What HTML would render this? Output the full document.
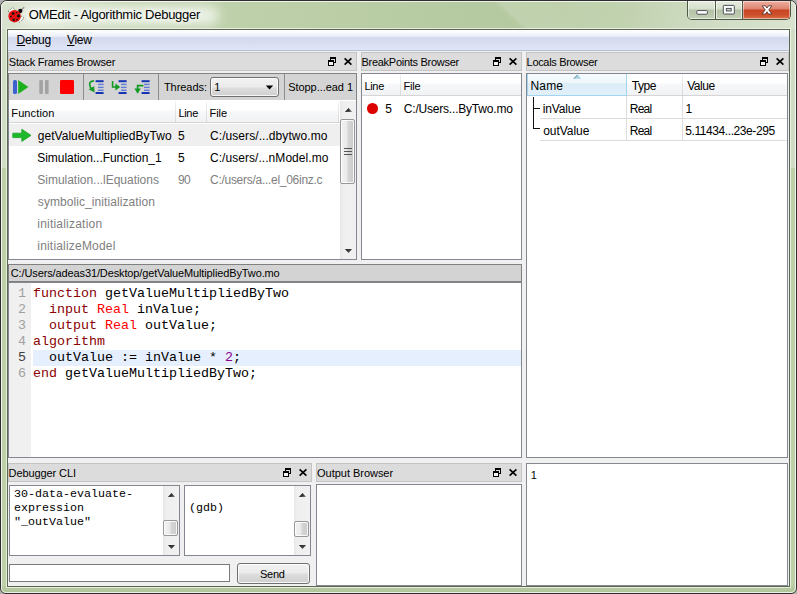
<!DOCTYPE html>
<html>
<head>
<meta charset="utf-8">
<title>OMEdit - Algorithmic Debugger</title>
<style>
html,body{margin:0;padding:0;}
body{width:797px;height:594px;overflow:hidden;background:#b0b0b0;font-family:"Liberation Sans",sans-serif;font-size:11px;color:#000;position:relative;}
div,span{box-sizing:border-box;}
.a{position:absolute;}
#frame{position:absolute;left:0;top:0;width:797px;height:594px;border-radius:7px 7px 6px 6px;background:#bdd0a8;border:1px solid #2e2e2e;overflow:hidden;}
#sideL,#sideR{position:absolute;top:28px;width:6px;height:139px;background:#d1dcc4;}
#sideL{left:0;}#sideR{left:789px;}
#frameglow{position:absolute;left:0;top:0;width:795px;height:592px;border-radius:6px 6px 5px 5px;border:1px solid rgba(255,255,255,.75);}
#titlegrad{position:absolute;left:0px;top:0px;width:795px;height:28px;overflow:hidden;background:linear-gradient(90deg,#d9e2ce 0px,#d9e2ce 45px,#cddac0 80px,#c4d4b3 120px,#bfd1ac 200px,#bccfa8 285px,#b7cba2 440px,#b5c9a0 520px,#b9cca5 620px,#c9d7bb 700px,#d6e0ca 795px);}
#stripe{position:absolute;left:490px;top:0;width:340px;height:28px;transform:skewX(47deg);transform-origin:0 0;background:linear-gradient(90deg,rgba(255,255,255,0) 0,rgba(255,255,255,.16) 8px,rgba(255,255,255,.12) 60px,rgba(255,255,255,.08) 100%);}
#tglow{position:absolute;left:20px;top:5px;width:198px;height:19px;border-radius:9px;background:rgba(244,248,240,.85);filter:blur(6px);}
#client{position:absolute;left:7px;top:29px;width:783px;height:558px;border:1px solid #5c6652;background:#f0f0f0;}
#clientglow{position:absolute;left:6px;top:28px;width:785px;height:560px;border:1px solid rgba(240,245,235,.8);}
#menubar{position:absolute;left:8px;top:30px;width:781px;height:21px;background:linear-gradient(180deg,#ffffff 0px,#f6f8fc 3px,#e9ecf7 7px,#d4daee 7px,#d7ddef 12px,#e0e5f5 19px,#e0e5f5 20px,#b9bfd8 20px,#b9bfd8 21px);}
.dt{position:absolute;height:19px;background:#dcdcdc;border:1px solid #c4c4c4;}
.panel{position:absolute;background:#fff;border:1px solid #828790;}
.t{position:absolute;white-space:nowrap;line-height:16px;}
.mono{font-family:"Liberation Mono",monospace;}
.hdr{position:absolute;height:21px;background:linear-gradient(180deg,#fff 0,#fff 9px,#f7f8fa 10px,#f1f2f4 21px);}
.hsep{position:absolute;width:1px;background:linear-gradient(180deg,#f2f2f2,#d8d8d8);}
.code{position:absolute;left:33px;white-space:pre;font-family:"Liberation Mono",monospace;font-size:13.333px;line-height:16px;height:16px;}
.ln{position:absolute;left:9px;width:17px;text-align:right;font-family:"Liberation Mono",monospace;font-size:13.333px;line-height:16px;color:#a0a0a0;}
.cli{position:absolute;white-space:pre;font-family:"Liberation Mono",monospace;font-size:11.667px;line-height:14px;}
.sbtrack{position:absolute;background:#f0f0f0;}
.thumb{position:absolute;border:1px solid #979797;border-radius:2px;background:linear-gradient(90deg,#f3f3f3 0,#e9e9e9 48%,#d6d6d6 52%,#cacaca 100%);box-shadow:inset 0 0 0 1px rgba(255,255,255,.85);}
.sbtrack{background:linear-gradient(90deg,#e6e6e6 0,#efefef 3px,#f1f1f1 100%);}
</style>
</head>
<body>
<div id="frame"><div id="titlegrad"><div id="stripe"></div></div><div id="tglow"></div><div class="a" style="left:0;top:585px;width:795px;height:7px;background:linear-gradient(180deg,#b9cba3,#b1c599)"></div><div id="sideL"></div><div id="sideR"></div><div id="frameglow"></div></div>
<div id="clientglow"></div>
<div id="client"></div>
<div id="menubar"></div>
<div class="a" style="left:8px;top:51px;width:781px;height:1px;background:#f0f0f0"></div>

<!-- dock titles -->
<div class="dt" style="left:8px;top:52px;width:349px"></div>
<div class="dt" style="left:361px;top:52px;width:161px"></div>
<div class="dt" style="left:526px;top:52px;width:263px"></div>
<div class="dt" style="left:8px;top:463px;width:304px"></div>
<div class="dt" style="left:316px;top:463px;width:206px"></div>

<svg class="a" width="0" height="0" style="left:0;top:0"><defs><linearGradient id="gu" x1="0" y1="0" x2="1" y2="1"><stop offset="0" stop-color="#111"/><stop offset="0.55" stop-color="#333"/><stop offset="1" stop-color="#8a8a8a"/></linearGradient><linearGradient id="gd" x1="0" y1="0" x2="1" y2="1"><stop offset="0" stop-color="#222"/><stop offset="0.6" stop-color="#444"/><stop offset="1" stop-color="#8a8a8a"/></linearGradient></defs></svg>
<!-- stack frames toolbar -->
<div class="a" style="left:8px;top:73px;width:349px;height:28px;background:#d4d4d4;border:1px solid #828282"></div>
<div class="a" style="left:83px;top:74px;width:1px;height:26px;background:#8c8c8c"></div>
<div class="a" style="left:158px;top:74px;width:1px;height:26px;background:#8c8c8c"></div>
<div class="a" style="left:284px;top:74px;width:1px;height:26px;background:#8c8c8c"></div>
<!-- resume / pause / stop -->
<svg class="a" style="left:12px;top:78px" width="66" height="18" viewBox="0 0 66 18">
<rect x="1" y="2" width="4" height="14" rx="1.5" fill="#3b62cf"/>
<path d="M6.2 2 L16.4 9 L6.2 16 Z" fill="#1cb01c"/>
<rect x="27.3" y="2" width="3.6" height="14" rx="1" fill="#a2a2a2"/>
<rect x="33" y="2" width="3.6" height="14" rx="1" fill="#a2a2a2"/>
<rect x="48" y="2" width="14" height="14" rx="1.2" fill="#ff0000"/>
</svg>
<!-- step icons -->
<svg class="a" style="left:86px;top:78px" width="70" height="18" viewBox="0 0 70 18">
<g id="bars1">
<rect x="9.6" y="2.2" width="8" height="2" fill="#1434b4"/>
<rect x="12" y="5.7" width="5.6" height="1.4" fill="#5f7dd6"/>
<rect x="12" y="8.7" width="5.6" height="1.4" fill="#5f7dd6"/>
<rect x="12" y="11.6" width="5.6" height="1.4" fill="#5f7dd6"/>
<rect x="9.6" y="14" width="8" height="2" fill="#1434b4"/>
</g>
<path d="M8 3.2 C4.2 2.6 2.6 5.2 4.2 8.6 L5.4 10.8" fill="none" stroke="#129a22" stroke-width="1.7"/>
<path d="M2.6 11.2 L8.2 8.2 L8.6 14.6 Z" fill="#129a22"/>
<g transform="translate(23,0)">
<rect x="9.6" y="2.2" width="8" height="2" fill="#1434b4"/>
<rect x="12" y="5.7" width="5.6" height="1.4" fill="#5f7dd6"/>
<rect x="12" y="8.7" width="5.6" height="1.4" fill="#5f7dd6"/>
<rect x="12" y="11.6" width="5.6" height="1.4" fill="#5f7dd6"/>
<rect x="9.6" y="14" width="8" height="2" fill="#1434b4"/>
<path d="M3.6 3 L3.6 9 L7 9" fill="none" stroke="#129a22" stroke-width="1.6"/>
<path d="M6.4 5.6 L11.2 9 L6.4 12.4 Z" fill="#129a22"/>
</g>
<g transform="translate(46,0)">
<rect x="9.6" y="2.2" width="8" height="2" fill="#1434b4"/>
<rect x="12" y="5.7" width="5.6" height="1.4" fill="#5f7dd6"/>
<rect x="12" y="8.7" width="5.6" height="1.4" fill="#5f7dd6"/>
<rect x="12" y="11.6" width="5.6" height="1.4" fill="#5f7dd6"/>
<rect x="9.6" y="14" width="8" height="2" fill="#1434b4"/>
<path d="M11.4 7.6 L5.6 7.6 L5.6 11" fill="none" stroke="#129a22" stroke-width="1.7"/>
<path d="M2.4 10.4 L8.8 10.4 L5.6 15.8 Z" fill="#129a22"/>
</g>
</svg>
<!-- combobox -->
<div class="a" style="left:210px;top:77px;width:69px;height:20px;border:1px solid #707070;border-radius:3px;background:linear-gradient(180deg,#f2f2f2 0,#ebebeb 9px,#dddddd 10px,#cfcfcf 18px);box-shadow:inset 0 0 0 1px rgba(255,255,255,.8)"></div>
<svg class="a" style="left:265px;top:85px" width="9" height="5" viewBox="0 0 9 5"><path d="M0.8 0.6 L8.2 0.6 L4.5 4.4 Z" fill="#000"/></svg>

<!-- stack frames tree -->
<div class="panel" style="left:8px;top:100px;width:349px;height:160px;border-top:none"></div>
<div class="hdr" style="left:9px;top:101px;width:330px"></div>
<div class="a" style="left:9px;top:122px;width:331px;height:1px;background:#d5d5d5"></div>
<div class="hsep" style="left:175px;top:101px;height:21px"></div>
<div class="hsep" style="left:206px;top:101px;height:21px"></div>
<div class="hsep" style="left:338px;top:101px;height:21px"></div>
<div class="a" style="left:9px;top:124px;width:331px;height:22px;background:#efefef"></div>
<svg class="a" style="left:11px;top:127px" width="22" height="16" viewBox="0 0 22 16"><path d="M1.8 6.2 L10.8 6.2 L10.8 2.2 L20 8.4 L10.8 14.4 L10.8 10.6 L1.8 10.6 Z" fill="#1eb82c" stroke="#18a224" stroke-width="0.8" stroke-linejoin="round"/></svg>
<!-- scrollbar -->
<div class="sbtrack" style="left:340px;top:101px;width:16px;height:158px"></div>
<svg class="a" style="left:344px;top:107px" width="9" height="6" viewBox="0 0 9 6"><path d="M0.9 4.9 L4.5 1.1 L8.1 4.9 Z" fill="url(#gu)"/></svg>
<svg class="a" style="left:344px;top:248px" width="9" height="6" viewBox="0 0 9 6"><path d="M0.9 1.1 L8.1 1.1 L4.5 4.9 Z" fill="url(#gd)"/></svg>
<div class="thumb" style="left:340px;top:119px;width:15px;height:65px"></div>
<div class="a" style="left:344px;top:148px;width:8px;height:1px;background:#555"></div>
<div class="a" style="left:344px;top:151px;width:8px;height:1px;background:#555"></div>
<div class="a" style="left:344px;top:154px;width:8px;height:1px;background:#555"></div>

<!-- breakpoints tree -->
<div class="panel" style="left:361px;top:73px;width:161px;height:187px"></div>
<div class="hdr" style="left:362px;top:74px;width:159px"></div>
<div class="a" style="left:362px;top:95px;width:159px;height:1px;background:#d5d5d5"></div>
<div class="hsep" style="left:400px;top:74px;height:21px"></div>
<div class="a" style="left:367.2px;top:103px;width:10.6px;height:10.6px;border-radius:50%;background:#dc0000"></div>

<!-- locals tree -->
<div class="panel" style="left:526px;top:73px;width:262px;height:385px"></div>
<div class="hdr" style="left:527px;top:74px;width:260px"></div>
<div class="a" style="left:527px;top:95px;width:260px;height:1px;background:#d5d5d5"></div>
<div class="a" style="left:527px;top:74px;width:100px;height:22px;border:1px solid #a3d5f0;border-top:none;background:linear-gradient(180deg,#f5fafd 0,#eff7fc 9px,#dcedf8 9px,#e1f0fa 21px)"></div>
<svg class="a" style="left:573px;top:74px" width="9" height="6" viewBox="0 0 9 6"><path d="M0.8 4.8 L4.6 0.8 L8.4 4.8 Z" fill="#a8d2e6"/><path d="M0.8 4.8 L4.6 0.8" stroke="#5b7d8e" stroke-width="0.9" fill="none"/></svg>
<div class="hsep" style="left:682px;top:74px;height:21px"></div>
<!-- grid lines -->
<div class="a" style="left:540px;top:118px;width:247px;height:1px;background:#dcdcdc"></div>
<div class="a" style="left:540px;top:140px;width:247px;height:1px;background:#dcdcdc"></div>
<div class="a" style="left:626px;top:96px;width:1px;height:44px;background:#dcdcdc"></div>
<div class="a" style="left:682px;top:96px;width:1px;height:44px;background:#dcdcdc"></div>
<!-- branches -->
<div class="a" style="left:533px;top:97px;width:1px;height:32px;background:#111"></div>
<div class="a" style="left:533px;top:108px;width:7px;height:1px;background:#111"></div>
<div class="a" style="left:533px;top:128px;width:7px;height:1px;background:#111"></div>

<!-- file label + editor -->
<div class="a" style="left:8px;top:264px;width:514px;height:18px;background:#d3d3d3;border:1px solid #808080"></div>
<div class="panel" style="left:8px;top:282px;width:514px;height:176px"></div>
<div class="a" style="left:9px;top:283px;width:22px;height:174px;background:#f0f0f0"></div>
<div class="a" style="left:33px;top:350px;width:488px;height:16px;background:#e6effd"></div>

<!-- CLI -->
<div class="panel" style="left:9px;top:485px;width:171px;height:71px"></div>
<div class="sbtrack" style="left:163px;top:486px;width:16px;height:69px"></div>
<div class="panel" style="left:184px;top:485px;width:127px;height:71px"></div>
<div class="sbtrack" style="left:294px;top:486px;width:16px;height:69px"></div>
<svg class="a" style="left:167px;top:492px" width="9" height="6" viewBox="0 0 9 6"><path d="M0.9 4.9 L4.5 1.1 L8.1 4.9 Z" fill="url(#gu)"/></svg>
<svg class="a" style="left:167px;top:544px" width="9" height="6" viewBox="0 0 9 6"><path d="M0.9 1.1 L8.1 1.1 L4.5 4.9 Z" fill="url(#gd)"/></svg>
<svg class="a" style="left:298px;top:492px" width="9" height="6" viewBox="0 0 9 6"><path d="M0.9 4.9 L4.5 1.1 L8.1 4.9 Z" fill="url(#gu)"/></svg>
<svg class="a" style="left:298px;top:544px" width="9" height="6" viewBox="0 0 9 6"><path d="M0.9 1.1 L8.1 1.1 L4.5 4.9 Z" fill="url(#gd)"/></svg>
<div class="thumb" style="left:163px;top:520px;width:15px;height:16px"></div>
<div class="thumb" style="left:294px;top:521px;width:15px;height:16px"></div>
<div class="a" style="left:9px;top:564px;width:221px;height:18px;background:#fff;border:1px solid #7a7a7a"></div>
<div class="a" style="left:237px;top:563px;width:73px;height:21px;border:1px solid #707070;border-radius:3px;background:linear-gradient(180deg,#f2f2f2 0,#ebebeb 9px,#dddddd 10px,#cfcfcf 19px);box-shadow:inset 0 0 0 1px rgba(255,255,255,.8)"></div>

<!-- output browser, bottom-right -->
<div class="panel" style="left:316px;top:484px;width:206px;height:102px"></div>
<div class="panel" style="left:526px;top:463px;width:262px;height:123px"></div>


<div class="t" style="left:28.7px;top:6px;font-size:13px;line-height:17px;letter-spacing:-0.27px;text-shadow:0 0 5px #fff,0 0 9px #fff;">OMEdit - Algorithmic Debugger</div>
<div class="t" style="left:16.6px;top:32px;font-size:12px;letter-spacing:-0.19px;"><u>D</u>ebug</div>
<div class="t" style="left:67.0px;top:32px;font-size:12px;letter-spacing:-0.31px;"><u>V</u>iew</div>
<div class="t" style="left:8.8px;top:54px;font-size:11px;letter-spacing:-0.25px;">Stack Frames Browser</div>
<div class="t" style="left:361.5px;top:54px;font-size:11px;letter-spacing:-0.28px;">BreakPoints Browser</div>
<div class="t" style="left:526.6px;top:54px;font-size:11px;letter-spacing:-0.32px;">Locals Browser</div>
<div class="t" style="left:8.6px;top:465px;font-size:11px;letter-spacing:-0.10px;">Debugger CLI</div>
<div class="t" style="left:317.1px;top:465px;font-size:11px;letter-spacing:-0.03px;">Output Browser</div>
<div class="t" style="left:163.9px;top:79px;font-size:11px;letter-spacing:-0.05px;">Threads:</div>
<div class="t" style="left:214.2px;top:79px;font-size:11px;">1</div>
<div class="t" style="left:288.2px;top:79px;font-size:11px;letter-spacing:-0.05px;">Stopp...ead 1</div>
<div class="t" style="left:11.3px;top:105px;font-size:11px;letter-spacing:0.12px;">Function</div>
<div class="t" style="left:178.5px;top:105px;font-size:11px;letter-spacing:-0.35px;">Line</div>
<div class="t" style="left:209.6px;top:105px;font-size:11px;letter-spacing:-0.07px;">File</div>
<div class="t" style="left:364.5px;top:78px;font-size:11px;letter-spacing:-0.35px;">Line</div>
<div class="t" style="left:403.4px;top:78px;font-size:11px;letter-spacing:-0.13px;">File</div>
<div class="t" style="left:530.4px;top:78px;font-size:12px;letter-spacing:0.21px;">Name</div>
<div class="t" style="left:631.7px;top:78px;font-size:12px;letter-spacing:-0.41px;">Type</div>
<div class="t" style="left:687.2px;top:78px;font-size:12px;letter-spacing:-0.46px;">Value</div>
<div class="t" style="left:37.8px;top:128px;font-size:12px;letter-spacing:0.03px;">getValueMultipliedByTwo</div>
<div class="t" style="left:177.9px;top:128px;font-size:12px;">5</div>
<div class="t" style="left:210.0px;top:128px;font-size:12px;letter-spacing:0.07px;">C:/users/...dbytwo.mo</div>
<div class="t" style="left:37.3px;top:150px;font-size:12px;letter-spacing:-0.05px;">Simulation...Function_1</div>
<div class="t" style="left:177.9px;top:150px;font-size:12px;">5</div>
<div class="t" style="left:210.0px;top:150px;font-size:12px;letter-spacing:0.05px;">C:/users/...nModel.mo</div>
<div class="t" style="left:37.3px;top:172px;font-size:12px;letter-spacing:-0.02px;color:#808080;">Simulation...lEquations</div>
<div class="t" style="left:178.0px;top:172px;font-size:12px;letter-spacing:-0.72px;color:#808080;">90</div>
<div class="t" style="left:210.0px;top:172px;font-size:12px;letter-spacing:-0.28px;color:#808080;">C:/users/a...el_06inz.c</div>
<div class="t" style="left:37.8px;top:194px;font-size:12px;letter-spacing:0.08px;color:#808080;">symbolic_initialization</div>
<div class="t" style="left:37.3px;top:216px;font-size:12px;letter-spacing:0.21px;color:#808080;">initialization</div>
<div class="t" style="left:37.3px;top:238px;font-size:12px;letter-spacing:0.19px;color:#808080;">initializeModel</div>
<div class="t" style="left:385.3px;top:101px;font-size:12px;">5</div>
<div class="t" style="left:403.8px;top:101px;font-size:12px;letter-spacing:-0.20px;">C:/Users...ByTwo.mo</div>
<div class="t" style="left:542.7px;top:101px;font-size:12px;letter-spacing:-0.15px;">inValue</div>
<div class="t" style="left:629.8px;top:101px;font-size:12px;letter-spacing:-0.76px;">Real</div>
<div class="t" style="left:685.6px;top:101px;font-size:12px;">1</div>
<div class="t" style="left:543.2px;top:123px;font-size:12px;letter-spacing:-0.05px;">outValue</div>
<div class="t" style="left:629.8px;top:123px;font-size:12px;letter-spacing:-0.76px;">Real</div>
<div class="t" style="left:685.2px;top:123px;font-size:12px;letter-spacing:-0.41px;">5.11434...23e-295</div>
<div class="t" style="left:10.8px;top:265px;font-size:11px;letter-spacing:-0.12px;">C:/Users/adeas31/Desktop/getValueMultipliedByTwo.mo</div>
<div class="t" style="left:260.1px;top:566px;font-size:11px;letter-spacing:-0.31px;">Send</div>
<div class="t" style="left:530.8px;top:467px;font-size:11px;font-family:"Liberation Serif",serif;">1</div>
<div class="code" style="top:286.4px"><span style="color:#8b0000">function</span> getValueMultipliedByTwo</div>
<div class="ln" style="top:286.4px;color:#a0a0a0">1</div>
<div class="code" style="top:302.4px">  <span style="color:#8b0000">input</span> <span style="color:#ff0000">Real</span> inValue;</div>
<div class="ln" style="top:302.4px;color:#a0a0a0">2</div>
<div class="code" style="top:318.4px">  <span style="color:#8b0000">output</span> <span style="color:#ff0000">Real</span> outValue;</div>
<div class="ln" style="top:318.4px;color:#a0a0a0">3</div>
<div class="code" style="top:334.4px"><span style="color:#8b0000">algorithm</span></div>
<div class="ln" style="top:334.4px;color:#a0a0a0">4</div>
<div class="code" style="top:350.4px">  outValue := inValue * <span style="color:#8b008b">2</span>;</div>
<div class="ln" style="top:350.4px;color:#404040">5</div>
<div class="code" style="top:366.4px"><span style="color:#8b0000">end</span> getValueMultipliedByTwo;</div>
<div class="ln" style="top:366.4px;color:#a0a0a0">6</div>
<div class="cli" style="left:14px;top:486.9px">30-data-evaluate-</div>
<div class="cli" style="left:14px;top:500.9px">expression</div>
<div class="cli" style="left:14px;top:514.9px">&quot;_outValue&quot;</div>
<div class="cli" style="left:189px;top:500.9px">(gdb)</div>
<svg class="a" style="left:328px;top:57px" width="25" height="10" viewBox="0 0 25 10"><rect x="2.5" y="1" width="5" height="4.5" fill="none" stroke="#000" stroke-width="1"/><rect x="2" y="0" width="6" height="2" fill="#000"/><rect x="0.5" y="4" width="5" height="4.5" fill="#f4f4f4" stroke="#000" stroke-width="1"/><rect x="0" y="3" width="6" height="2" fill="#000"/><path d="M16.6 1.4 L23.4 7.6 M23.4 1.4 L16.6 7.6" stroke="#000" stroke-width="1.65" fill="none"/></svg>
<svg class="a" style="left:493px;top:57px" width="25" height="10" viewBox="0 0 25 10"><rect x="2.5" y="1" width="5" height="4.5" fill="none" stroke="#000" stroke-width="1"/><rect x="2" y="0" width="6" height="2" fill="#000"/><rect x="0.5" y="4" width="5" height="4.5" fill="#f4f4f4" stroke="#000" stroke-width="1"/><rect x="0" y="3" width="6" height="2" fill="#000"/><path d="M16.6 1.4 L23.4 7.6 M23.4 1.4 L16.6 7.6" stroke="#000" stroke-width="1.65" fill="none"/></svg>
<svg class="a" style="left:760px;top:57px" width="25" height="10" viewBox="0 0 25 10"><rect x="2.5" y="1" width="5" height="4.5" fill="none" stroke="#000" stroke-width="1"/><rect x="2" y="0" width="6" height="2" fill="#000"/><rect x="0.5" y="4" width="5" height="4.5" fill="#f4f4f4" stroke="#000" stroke-width="1"/><rect x="0" y="3" width="6" height="2" fill="#000"/><path d="M16.6 1.4 L23.4 7.6 M23.4 1.4 L16.6 7.6" stroke="#000" stroke-width="1.65" fill="none"/></svg>
<svg class="a" style="left:283px;top:468px" width="25" height="10" viewBox="0 0 25 10"><rect x="2.5" y="1" width="5" height="4.5" fill="none" stroke="#000" stroke-width="1"/><rect x="2" y="0" width="6" height="2" fill="#000"/><rect x="0.5" y="4" width="5" height="4.5" fill="#f4f4f4" stroke="#000" stroke-width="1"/><rect x="0" y="3" width="6" height="2" fill="#000"/><path d="M16.6 1.4 L23.4 7.6 M23.4 1.4 L16.6 7.6" stroke="#000" stroke-width="1.65" fill="none"/></svg>
<svg class="a" style="left:493px;top:468px" width="25" height="10" viewBox="0 0 25 10"><rect x="2.5" y="1" width="5" height="4.5" fill="none" stroke="#000" stroke-width="1"/><rect x="2" y="0" width="6" height="2" fill="#000"/><rect x="0.5" y="4" width="5" height="4.5" fill="#f4f4f4" stroke="#000" stroke-width="1"/><rect x="0" y="3" width="6" height="2" fill="#000"/><path d="M16.6 1.4 L23.4 7.6 M23.4 1.4 L16.6 7.6" stroke="#000" stroke-width="1.65" fill="none"/></svg>
<!-- caption buttons -->
<div class="a" style="left:687px;top:1px;width:104px;height:19px;border:1px solid #4f5747;border-top:none;border-radius:0 0 5px 5px;overflow:hidden;background:#c4d0b8">
 <div class="a" style="left:0;top:0;width:27px;height:18px;background:linear-gradient(180deg,#e6ecdf 0,#d6dfcc 8px,#b4c2a6 9px,#c3cfb6 18px);box-shadow:inset 0 0 0 1px rgba(255,255,255,.6)"></div>
 <div class="a" style="left:27px;top:0;width:1px;height:18px;background:#4f5747"></div>
 <div class="a" style="left:28px;top:0;width:26px;height:18px;background:linear-gradient(180deg,#e6ecdf 0,#d6dfcc 8px,#b4c2a6 9px,#c3cfb6 18px);box-shadow:inset 0 0 0 1px rgba(255,255,255,.6)"></div>
 <div class="a" style="left:54px;top:0;width:1px;height:18px;background:#4f5747"></div>
 <div class="a" style="left:55px;top:0;width:47px;height:18px;background:linear-gradient(180deg,#eeb0a0 0,#dc8470 8px,#c94424 9px,#cd4f2b 14px,#d9764a 18px);box-shadow:inset 0 0 0 1px rgba(255,255,255,.45)"></div>
</div>
<svg class="a" style="left:688px;top:0px" width="102" height="20" viewBox="0 0 102 20">
<rect x="8.8" y="10.6" width="10.6" height="3.6" rx="0.8" fill="#fff" stroke="#4a4f58" stroke-width="1"/>
<rect x="35.3" y="5.4" width="11" height="8.6" rx="0.8" fill="#fff" stroke="#4a4f58" stroke-width="1"/>
<rect x="38.4" y="8.4" width="4.8" height="2.6" fill="#c8d2be" stroke="#4a4f58" stroke-width="1"/>
<path d="M74.2 5.8 L77.4 5.8 L79 8 L80.6 5.8 L83.8 5.8 L80.8 9.9 L83.9 14 L80.6 14 L79 11.8 L77.4 14 L74.1 14 L77.2 9.9 Z" fill="#fff" stroke="#5a3a34" stroke-width="0.9" stroke-linejoin="round"/>
</svg>
<!-- ladybug -->
<svg class="a" style="left:6px;top:4px" width="22" height="22" viewBox="0 0 22 22">
<path d="M2.1 7.4 L6.9 3.5 L9 5.8 L5 9.6 Z" fill="#f6f8f2" stroke="#333" stroke-width="0.7" stroke-dasharray="1.1 1.1"/>
<path d="M15.3 12 L18 14.3 L13.3 18.4 L11.6 17 Z" fill="#f6f8f2" stroke="#333" stroke-width="0.7" stroke-dasharray="1.1 1.1"/>
<path d="M15.6 5.8 L17.8 3.6" stroke="#9a9a9a" stroke-width="1.4" stroke-linecap="round" fill="none"/>
<circle cx="14.3" cy="7" r="2.15" fill="#0a0a0a"/>
<circle cx="8.6" cy="12.2" r="6.2" fill="#e81010"/>
<circle cx="7.1" cy="9.6" r="1.4" fill="#111"/>
<circle cx="10.7" cy="8.5" r="0.75" fill="#111"/>
<circle cx="12.5" cy="11.9" r="1.6" fill="#111"/>
<circle cx="4.9" cy="12.6" r="0.9" fill="#111"/>
<circle cx="7.7" cy="15.7" r="1.3" fill="#111"/>
<circle cx="11" cy="15.6" r="0.85" fill="#111"/>
</svg>

</body>
</html>
